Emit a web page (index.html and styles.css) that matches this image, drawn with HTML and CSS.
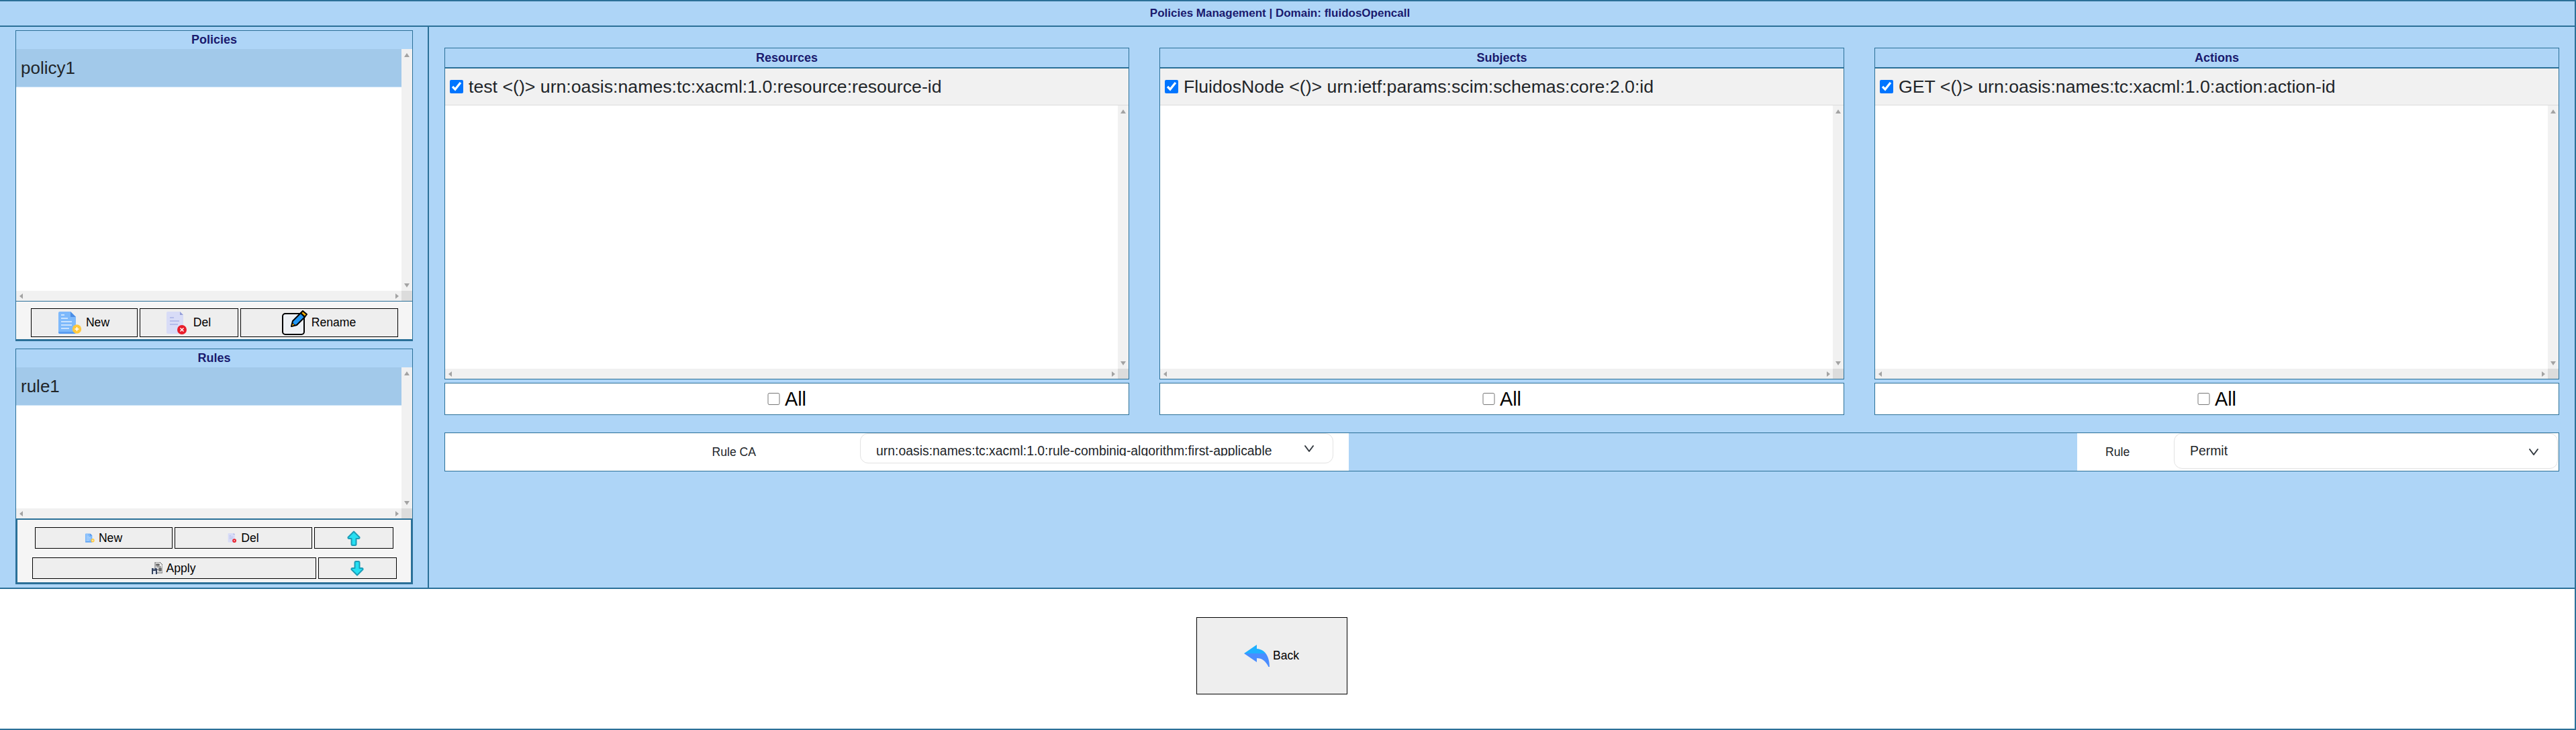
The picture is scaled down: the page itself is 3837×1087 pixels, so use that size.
FILE: index.html
```html
<!DOCTYPE html>
<html lang="en">

<head>
    <meta charset="UTF-8">
    <meta name="viewport" content="width=device-width, initial-scale=1.0">
    <title>Policies Management</title>
    <link rel="stylesheet" href="styles.css">
</head>

<body>
    <svg class="icon-defs" aria-hidden="true">
        <defs>
            <linearGradient id="backFill" x1="0" y1="0" x2="0" y2="1">
                <stop offset="0.4" stop-color="#1fb0ff" />
                <stop offset="0.4" stop-color="#4a8dff" />
            </linearGradient>
        </defs>
        <symbol id="docNew" viewBox="0 0 35 33">
            <path d="M2 0H18L26 8V31Q26 33 24 33H2Q0 33 0 31V2Q0 0 2 0Z" fill="#7db9fb" />
            <path d="M0 30Q0 33 2 33H24Q26 33 26 31V30Z" fill="#5a9cef" />
            <path d="M18 0L26 8H18Z" fill="#4a8de6" />
            <path d="M4 5H9M4 10H14M4 15H20M4 20H20M4 25H16" stroke="#e4f1ff" stroke-width="1.5" fill="none" />
            <circle cx="27.5" cy="26" r="6.7" fill="#ffc83d" />
            <path d="M27.5 23V29M24.5 26H30.5" stroke="#fff" stroke-width="1.5" />
        </symbol>
        <symbol id="docDel" viewBox="0 0 31 34">
            <path d="M2 0H20L25 5V31Q25 33 23 33H2Q0 33 0 31V2Q0 0 2 0Z" fill="#d8dcf7" />
            <path d="M20 0L25 5H20Z" fill="#969fd8" />
            <path d="M5 9H11M5 14H19M5 19H17" stroke="#a8b1e6" stroke-width="1.5" fill="none" />
            <circle cx="23" cy="27" r="7" fill="#e81d2a" />
            <path d="M20.5 24.5L25.5 29.5M25.5 24.5L20.5 29.5" stroke="#fff" stroke-width="1.5" />
        </symbol>
        <symbol id="rename" viewBox="0 0 38 37">
            <rect x="1" y="5" width="32" height="31" rx="4" fill="#edf0f4" stroke="#000" stroke-width="2" />
            <path d="M14 24L16 16L28 4L34 10L22 22Z" fill="#2196f3" stroke="#000" stroke-width="2" stroke-linejoin="round" />
            <path d="M14 24L16 19L19 22Z" fill="#ffb300" stroke="#000" stroke-width="1" />
            <path d="M28 4L31 1L37 6L34 10Z" fill="#ffb300" stroke="#000" stroke-width="2" stroke-linejoin="round" />
        </symbol>
        <symbol id="apply" viewBox="0 0 16 18">
            <path d="M5 0H12L16 4V16H5Z" fill="#e8e8e8" stroke="#666" stroke-width="1" />
            <path d="M7 3H11V5H7ZM7 7H14M11 9H14V13H11ZM7 11H10" stroke="#555" stroke-width="1.2" fill="#777" />
            <path d="M0 9H7L8 10V18H0Z" fill="#35435f" />
            <rect x="2" y="13" width="4" height="5" fill="#dfe5ee" />
            <rect x="2" y="9" width="3" height="2" fill="#8d99ad" />
        </symbol>
        <symbol id="arrowUp" viewBox="0 0 20 23">
            <path d="M10 1.5L18.5 10Q19 12 17 12H13.5V20Q13.5 22 12 22H8Q6.5 22 6.5 20V12H3Q1 12 1.5 10Z" fill="#25dff2" stroke="#1b9cb7" stroke-width="2" stroke-linejoin="round" />
        </symbol>
        <symbol id="arrowDown" viewBox="0 0 20 23">
            <path d="M10 21.5L18.5 13Q19 11 17 11H13.5V3Q13.5 1 12 1H8Q6.5 1 6.5 3V11H3Q1 11 1.5 13Z" fill="#25dff2" stroke="#1b9cb7" stroke-width="2" stroke-linejoin="round" />
        </symbol>
        <symbol id="chevron" viewBox="0 0 16 12">
            <path d="M2 2L8 10L14 2" fill="none" stroke="#343a40" stroke-width="2" stroke-linecap="round" stroke-linejoin="round" />
        </symbol>
    </svg>

    <div class="page">
        <div class="top-bar">Policies Management | Domain: fluidosOpencall</div>

        <div class="main">
            <div class="sidebar">
                <div class="panel panel-policies">
                    <div class="panel-title">Policies</div>
                    <div class="scrollbox">
                        <div class="scroll-content">
                            <div class="list-item">policy1</div>
                        </div>
                        <div class="scroll-v"><i class="tri tri-up"></i><i class="tri tri-down"></i></div>
                        <div class="scroll-h"><i class="tri tri-left"></i><i class="tri tri-right"></i></div>
                        <div class="scroll-corner"></div>
                    </div>
                    <div class="actions actions-policies">
                        <div class="action-row">
                            <button class="btn btn-new" type="button"><svg class="icon icon-doc-new"><use href="#docNew" /></svg>New</button>
                            <button class="btn btn-del" type="button"><svg class="icon icon-doc-del"><use href="#docDel" /></svg>Del</button>
                            <button class="btn btn-rename" type="button"><svg class="icon icon-rename"><use href="#rename" /></svg>Rename</button>
                        </div>
                    </div>
                </div>

                <div class="panel panel-rules">
                    <div class="panel-title">Rules</div>
                    <div class="scrollbox">
                        <div class="scroll-content">
                            <div class="list-item">rule1</div>
                        </div>
                        <div class="scroll-v"><i class="tri tri-up"></i><i class="tri tri-down"></i></div>
                        <div class="scroll-h"><i class="tri tri-left"></i><i class="tri tri-right"></i></div>
                        <div class="scroll-corner"></div>
                    </div>
                    <div class="actions actions-rules">
                        <div class="action-row">
                            <button class="btn btn-rule" type="button"><svg class="icon icon-small"><use href="#docNew" /></svg>New</button>
                            <button class="btn btn-rule" type="button"><svg class="icon icon-small"><use href="#docDel" /></svg>Del</button>
                            <button class="btn btn-move-up" type="button"><svg class="icon icon-arrow"><use href="#arrowUp" /></svg></button>
                        </div>
                        <div class="action-row">
                            <button class="btn btn-apply" type="button"><svg class="icon icon-apply"><use href="#apply" /></svg>Apply</button>
                            <button class="btn btn-move-down" type="button"><svg class="icon icon-arrow"><use href="#arrowDown" /></svg></button>
                        </div>
                    </div>
                </div>
            </div>

            <div class="content">
                <div class="columns">
                    <div class="column">
                        <div class="box">
                            <div class="box-title">Resources</div>
                            <label class="attr-row"><input class="attr-check" type="checkbox" checked>test &lt;()&gt; urn:oasis:names:tc:xacml:1.0:resource:resource-id</label>
                            <div class="scrollbox scrollbox-box">
                                <div class="scroll-content"></div>
                                <div class="scroll-v"><i class="tri tri-up"></i><i class="tri tri-down"></i></div>
                                <div class="scroll-h"><i class="tri tri-left"></i><i class="tri tri-right"></i></div>
                                <div class="scroll-corner"></div>
                            </div>
                        </div>
                        <label class="all-box"><input class="all-check" type="checkbox">All</label>
                    </div>

                    <div class="column">
                        <div class="box">
                            <div class="box-title">Subjects</div>
                            <label class="attr-row"><input class="attr-check" type="checkbox" checked>FluidosNode &lt;()&gt; urn:ietf:params:scim:schemas:core:2.0:id</label>
                            <div class="scrollbox scrollbox-box">
                                <div class="scroll-content"></div>
                                <div class="scroll-v"><i class="tri tri-up"></i><i class="tri tri-down"></i></div>
                                <div class="scroll-h"><i class="tri tri-left"></i><i class="tri tri-right"></i></div>
                                <div class="scroll-corner"></div>
                            </div>
                        </div>
                        <label class="all-box"><input class="all-check" type="checkbox">All</label>
                    </div>

                    <div class="column">
                        <div class="box">
                            <div class="box-title">Actions</div>
                            <label class="attr-row"><input class="attr-check" type="checkbox" checked>GET &lt;()&gt; urn:oasis:names:tc:xacml:1.0:action:action-id</label>
                            <div class="scrollbox scrollbox-box">
                                <div class="scroll-content"></div>
                                <div class="scroll-v"><i class="tri tri-up"></i><i class="tri tri-down"></i></div>
                                <div class="scroll-h"><i class="tri tri-left"></i><i class="tri tri-right"></i></div>
                                <div class="scroll-corner"></div>
                            </div>
                        </div>
                        <label class="all-box"><input class="all-check" type="checkbox">All</label>
                    </div>
                </div>

                <div class="rule-bar">
                    <div class="rule-group rule-group-ca">
                        <span class="rule-label rule-label-ca">Rule CA</span>
                        <div class="fake-select fake-select-ca">
                            <span class="fake-select-text">urn:oasis:names:tc:xacml:1.0:rule-combinig-algorithm:first-applicable</span>
                            <svg class="chevron"><use href="#chevron" /></svg>
                        </div>
                    </div>
                    <div class="rule-group rule-group-effect">
                        <span class="rule-label rule-label-effect">Rule</span>
                        <div class="fake-select fake-select-effect">
                            <span class="fake-select-text">Permit</span>
                            <svg class="chevron"><use href="#chevron" /></svg>
                        </div>
                    </div>
                </div>
            </div>
        </div>

        <div class="footer">
            <button class="btn btn-back" type="button">
                <svg class="icon-back" viewBox="0 0 38 33"><path d="M0 13L19 0V6C33 7 38 20 38 33H36.5C32 24 27 20 19 20V26Z" fill="url(#backFill)" /></svg>Back
            </button>
        </div>
    </div>
</body>

</html>
```

FILE: styles.css
```css
* {
    box-sizing: border-box;
}

body {
    margin: 0;
    background-color: #fff;
    color: #212529;
    font-family: "Liberation Sans", Arial, sans-serif;
    overflow: hidden;
}

.icon-defs {
    position: absolute;
    width: 0;
    height: 0;
}

.page {
    display: flex;
    flex-direction: column;
    height: 1087px;
    border-top: 2px solid #2b7098;
    border-right: 2px solid #2b7098;
    border-bottom: 2px solid #2b7098;
}

.top-bar {
    height: 38px;
    padding-right: 22px;
    border-bottom: 2px solid #2b7098;
    background-color: #aed5f7;
    color: #1a1a6e;
    font-size: 17px;
    font-weight: bold;
    line-height: 36px;
    text-align: center;
}

.main {
    display: flex;
    height: 837px;
    border-bottom: 2px solid #2b7098;
    background-color: #aed5f7;
}

/* left side */
.sidebar {
    display: flex;
    flex-direction: column;
    gap: 11px;
    width: 639px;
    padding: 5px 22px 0 23px;
    border-right: 2px solid #2b7098;
}

.panel {
    display: flex;
    flex-direction: column;
    border: 1px solid #2b7098;
    border-bottom: 0;
}

.panel-policies {
    height: 463px;
}

.panel-rules {
    height: 351px;
}

.panel-title {
    height: 27px;
    color: #1a1a6e;
    font-size: 18px;
    font-weight: bold;
    line-height: 27px;
    text-align: center;
}

.panel-policies .scrollbox {
    height: 375px;
}

.panel-rules .scrollbox {
    height: 225px;
}

.list-item {
    height: 57px;
    padding-left: 7px;
    border-bottom: 1px solid #c5dff5;
    background-color: #a2c9ea;
    font-size: 26px;
    line-height: 56px;
}

/* scrollbars are always drawn, the lists never overflow here */
.scrollbox {
    display: grid;
    grid-template-columns: 1fr 16px;
    grid-template-rows: 1fr 15px;
    background-color: #fff;
}

.scroll-content {
    background-color: #fff;
}

.scroll-v {
    display: flex;
    flex-direction: column;
    align-items: center;
    justify-content: space-between;
    padding: 6px 0 5px;
    background-color: #f1f1f1;
}

.scroll-h {
    display: flex;
    align-items: center;
    justify-content: space-between;
    padding: 0 4px 0 5px;
    background-color: #f1f1f1;
}

.scroll-corner {
    background-color: #dcdcdc;
}

.tri {
    display: block;
    width: 0;
    height: 0;
    border-style: solid;
    border-color: transparent;
}

.tri-up {
    border-width: 0 4px 6px;
    border-bottom-color: #a3a3a3;
}

.tri-down {
    border-width: 6px 4px 0;
    border-top-color: #a3a3a3;
}

.tri-left {
    border-width: 4px 5px 4px 0;
    border-right-color: #a3a3a3;
}

.tri-right {
    border-width: 4px 0 4px 5px;
    border-left-color: #a3a3a3;
}

.actions {
    display: flex;
    flex-direction: column;
    align-items: center;
    background-color: #f5f5f5;
}

.actions-policies {
    height: 60px;
    margin: 0 -1px;
    padding-top: 10px;
    border-top: 1px solid #2b7098;
    border-right: 1px solid #2b7098;
    border-bottom: 3px solid #2b7098;
    border-left: 1px solid #2b7098;
}

.actions-rules {
    gap: 13px;
    height: 98px;
    margin: 0 -1px;
    padding-top: 11px;
    border: 3px solid #2b7098;
    border-top-width: 2px;
}

.action-row {
    display: flex;
    gap: 3px;
}

/* buttons */
.btn {
    display: flex;
    align-items: center;
    justify-content: center;
    padding: 0;
    border: 1px solid #000;
    border-radius: 0;
    background-color: #eee;
    color: #000;
    font-family: inherit;
    font-size: 17.6px;
}

.btn-new {
    width: 159px;
    height: 43px;
}

.btn-del {
    width: 147px;
    height: 43px;
}

.btn-rename {
    width: 235px;
    height: 43px;
}

.btn-rule {
    width: 205px;
    height: 32px;
}

.btn-move-up {
    width: 118px;
    height: 32px;
}

.btn-apply {
    width: 423px;
    height: 32px;
}

.btn-move-down {
    width: 117px;
    height: 32px;
}

.btn-back {
    width: 225px;
    height: 115px;
}

.icon-doc-new {
    width: 35px;
    height: 33px;
    margin-right: 6px;
}

.icon-doc-del {
    width: 31px;
    height: 34px;
    margin-right: 9px;
}

.icon-rename {
    width: 38px;
    height: 37px;
    margin-right: 6px;
}

.icon-small {
    width: 14px;
    height: 14px;
    margin-right: 6px;
}

.icon-apply {
    width: 16px;
    height: 18px;
    margin-right: 5px;
}

.icon-arrow {
    width: 20px;
    height: 23px;
}

.icon-back {
    width: 38px;
    height: 33px;
    margin-right: 5px;
}

/* right side */
.content {
    flex: 1;
    padding: 31px 23px 0;
}

.columns {
    display: grid;
    grid-template-columns: repeat(3, 1fr);
    gap: 45px;
}

.column {
    display: flex;
    flex-direction: column;
    gap: 5px;
}

.box {
    display: flex;
    flex-direction: column;
    height: 494px;
    border: 1px solid #2b7098;
}

.box-title {
    flex: none;
    height: 30px;
    border-bottom: 2px solid #2b7098;
    color: #1a1a6e;
    font-size: 18px;
    font-weight: bold;
    line-height: 28px;
    text-align: center;
}

.attr-row {
    display: flex;
    flex: none;
    align-items: center;
    gap: 8px;
    height: 55px;
    padding-left: 7px;
    border-bottom: 1px solid #dcdcdc;
    background-color: #f1f1f1;
    font-size: 26.7px;
}

.attr-check {
    width: 20px;
    height: 20px;
    margin: 0;
}

.scrollbox-box {
    flex: 1;
}

.all-box {
    display: flex;
    align-items: center;
    justify-content: center;
    gap: 7px;
    height: 48px;
    border: 1px solid #2b7098;
    background-color: #fff;
    color: #000;
    font-size: 28.8px;
}

.all-check {
    width: 19px;
    height: 18px;
    margin: 0;
}

.rule-bar {
    display: flex;
    justify-content: space-between;
    height: 58px;
    margin-top: 26px;
    border: 1px solid #2b7098;
}

.rule-group {
    display: flex;
    background-color: #fff;
}

.rule-group-ca {
    width: 1346px;
}

.rule-group-effect {
    width: 717px;
}

.rule-label {
    padding-top: 18px;
    font-size: 17.6px;
    line-height: 20px;
}

.rule-label-ca {
    width: 618px;
    padding-right: 155px;
    text-align: right;
}

.rule-label-effect {
    width: 144px;
    padding-left: 42px;
}

.fake-select {
    display: flex;
    justify-content: space-between;
    padding: 16px 27px 0 23px;
    border: 1px solid #e2e2e2;
    border-radius: 12px;
    background-color: #fff;
}

.fake-select-ca {
    width: 705px;
    height: 45px;
}

.fake-select-effect {
    width: 572px;
    height: 53px;
}

.fake-select-text {
    display: block;
    font-size: 19.4px;
    line-height: 19px;
}

/* the long value sits in a box too short for it, its descenders get cut */
.fake-select-ca .fake-select-text {
    height: 17px;
    overflow: hidden;
}

.chevron {
    width: 16px;
    height: 12px;
}

.fake-select-effect .chevron {
    margin-top: 5px;
}

.footer {
    display: flex;
    flex: 1;
    align-items: flex-start;
    justify-content: center;
    padding: 42px 47px 0 0;
    background-color: #fff;
}
```
